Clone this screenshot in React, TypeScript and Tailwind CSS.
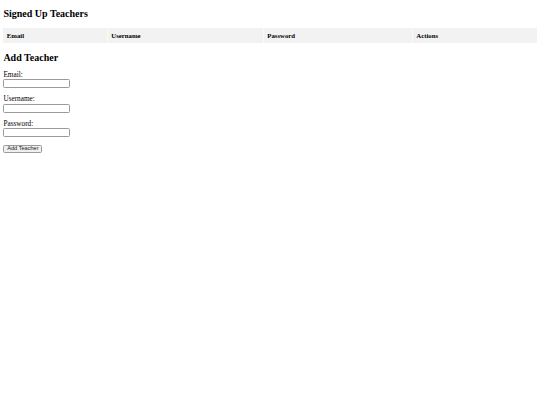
const columns = ["Email", "Username", "Password", "Actions"];

const fields = [
  { id: "email", label: "Email:", type: "email" },
  { id: "username", label: "Username:", type: "text" },
  { id: "password", label: "Password:", type: "password" },
];

export default function App() {
  return (
    <div className="min-h-[405px] bg-white px-[3.4px] pt-[8.4px] font-['Liberation_Serif',serif] text-black">
      <h2 className="text-[10px] font-bold leading-[11.5px]">Signed Up Teachers</h2>

      <table className="mt-[8.4px] w-full border-collapse text-[6.75px]">
        <thead>
          <tr>
            {columns.map((col, i) => (
              <th
                key={col}
                className={`bg-[#f2f2f2] px-[3.4px] py-[3.6px] text-left font-bold leading-[7.75px] ${
                  i === 0 ? "w-[104px]" : i === 1 ? "w-[156px] border-l border-[#fafafa]" : i === 2 ? "w-[149px] border-l border-[#fafafa]" : "border-l border-[#fafafa]"
                }`}
              >
                {col}
              </th>
            ))}
          </tr>
        </thead>
        <tbody></tbody>
      </table>

      <h2 className="mt-[8.5px] text-[10px] font-bold leading-[11.5px]">Add Teacher</h2>

      <form className="mt-[8.4px] text-[7.25px] leading-[7.75px]" onSubmit={(e) => e.preventDefault()}>
        {fields.map((f) => (
          <div key={f.id} className="mb-[7.75px]">
            <label htmlFor={f.id} className="block">
              {f.label}
            </label>
            <input
              id={f.id}
              type={f.type}
              className="block h-[9px] w-[67px] rounded-[1.5px] border border-[#9a9a9a] bg-white"
            />
          </div>
        ))}
        <button
          type="submit"
          className="-mt-px h-[8.5px] w-[39px] rounded-[1.5px] border border-[#9a9a9a] bg-[#efefef] font-['Liberation_Sans',sans-serif] text-[5.6px] leading-none text-[#222]"
        >
          Add Teacher
        </button>
      </form>
    </div>
  );
}
